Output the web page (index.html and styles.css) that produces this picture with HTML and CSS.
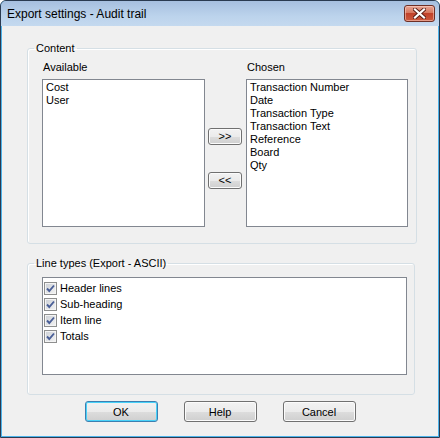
FILE: index.html
```html
<!DOCTYPE html>
<html lang="en">
<head>
<meta charset="UTF-8">
<title>Export settings - Audit trail</title>
<link rel="stylesheet" href="styles.css">
</head>
<body>
    <!-- Dialog window -->
    <div class="window">
        <div class="titlebar">
            <span class="title">Export settings - Audit trail</span>
            <button class="close" title="Close">
                <svg width="13" height="11" viewBox="0 0 13 11">
                    <path d="M2 1.5 L11 9.5 M11 1.5 L2 9.5" stroke="#5a1e16" stroke-width="4" stroke-linecap="square"/>
                    <path d="M2 1.5 L11 9.5 M11 1.5 L2 9.5" stroke="#ffffff" stroke-width="2.2" stroke-linecap="square"/>
                </svg>
            </button>
        </div>

        <div class="client">
            <fieldset class="group content-group">
                <legend>Content</legend>
                <div class="content-row">
                    <div class="col col-available">
                        <div class="caption">Available</div>
                        <div class="listbox">
                            <div>Cost</div>
                            <div>User</div>
                        </div>
                    </div>
                    <div class="mover">
                        <button class="btn small">&gt;&gt;</button>
                        <button class="btn small">&lt;&lt;</button>
                    </div>
                    <div class="col col-chosen">
                        <div class="caption">Chosen</div>
                        <div class="listbox">
                            <div>Transaction Number</div>
                            <div>Date</div>
                            <div>Transaction Type</div>
                            <div>Transaction Text</div>
                            <div>Reference</div>
                            <div>Board</div>
                            <div>Qty</div>
                        </div>
                    </div>
                </div>
            </fieldset>

            <fieldset class="group lines-group">
                <legend>Line types (Export - ASCII)</legend>
                <div class="listbox checklist">
                    <label class="check"><span class="box"></span>Header lines</label>
                    <label class="check"><span class="box"></span>Sub-heading</label>
                    <label class="check"><span class="box"></span>Item line</label>
                    <label class="check"><span class="box"></span>Totals</label>
                </div>
            </fieldset>

            <div class="actions">
                <button class="btn default">OK</button>
                <button class="btn">Help</button>
                <button class="btn">Cancel</button>
            </div>
        </div>
    </div>
</body>
</html>
```

FILE: styles.css
```css
body {
    margin: 0;
    background: #ffffff;
    font-family: "Liberation Sans", Arial, sans-serif;
    font-size: 11px;
    color: #000;
}
.window {
    width: 440px;
    height: 438px;
    box-sizing: border-box;
    border: 1px solid #2a3a50;
    border-radius: 6px 6px 0 0;
    background: #4db3ea;
    display: flex;
    flex-direction: column;
    overflow: hidden;
}
.titlebar {
    height: 25px;
    flex: none;
    display: flex;
    align-items: center;
    padding: 0 4px 0 6px;
    background: linear-gradient(#a6bfdf, #bcd3ec 60%, #c4d9ef);
}
.title {
    flex: 1;
    font-size: 12px;
    color: #000;
    padding-top: 1px;
}
.close {
    width: 31px;
    height: 17px;
    margin-bottom: 1px;
    padding: 0;
    border: 1px solid #6e2f25;
    border-radius: 3px;
    background: linear-gradient(#e8a493, #d7785f 45%, #c1412a 50%, #cc5a3e 100%);
    box-shadow: inset 0 0 0 1px rgba(255, 220, 210, 0.5);
    display: flex;
    align-items: center;
    justify-content: center;
}
.client {
    flex: 1;
    margin: 0 1px 1px 1px;
    background: #f0f0f0;
    overflow: hidden;
}
.group {
    margin: 0 0 0 25px;
    border: 1px solid #d5dfe5;
    border-radius: 3px;
    box-shadow: inset 1px 1px 0 #fff;
    min-width: 0;
}
.group legend {
    line-height: 13px;
    padding: 0 2px;
    margin-left: 6px;
}
.content-group {
    width: 390px;
    box-sizing: border-box;
    margin-top: 16px;
    padding: 6px 0 16px 0;
}
.lines-group {
    width: 388px;
    box-sizing: border-box;
    margin-top: 13px;
    padding: 7px 0 19px 0;
}
.content-row {
    display: flex;
    margin-left: 14px;
}
.caption {
    line-height: 13px;
    padding-left: 1px;
    margin-bottom: 5px;
}
.col-available {
    width: 163px;
}
.col-chosen {
    width: 162px;
}
.listbox {
    height: 148px;
    box-sizing: border-box;
    border: 1px solid #828790;
    background: #fff;
    padding: 1px 3px;
    line-height: 13px;
}
.mover {
    width: 34px;
    margin: 0 4px 0 3px;
    padding-top: 67px;
    display: flex;
    flex-direction: column;
    gap: 27px;
}
.btn {
    font-family: "Liberation Sans", Arial, sans-serif;
    font-size: 11px;
    color: #000;
    width: 73px;
    height: 21px;
    padding: 0;
    border: 1px solid #707070;
    border-radius: 3px;
    background: linear-gradient(#f2f2f2, #ebebeb 50%, #dddddd 51%, #cfcfcf);
    box-shadow: inset 0 0 0 1px #fbfbfb;
}
.btn.small {
    width: 34px;
    height: 17px;
    line-height: 13px;
}
.btn.default {
    border-color: #3c7fb1;
    box-shadow: inset 0 0 0 1px #48d2f9;
}
.checklist {
    height: 98px;
    margin: 0 7px 0 14px;
    padding: 2px 1px;
}
.check {
    display: flex;
    align-items: center;
    height: 16px;
}
.box {
    width: 13px;
    height: 13px;
    box-sizing: border-box;
    margin-right: 3px;
    border: 1px solid #8e8f8f;
    background:
        url("data:image/svg+xml;utf8,<svg xmlns='http://www.w3.org/2000/svg' width='11' height='11'><path d='M2 5.5 L4.3 8 L9 2.5' fill='none' stroke='%234a5f97' stroke-width='1.9'/></svg>") no-repeat,
        linear-gradient(135deg, #cbcfd5, #f4f4f4);
    box-shadow: inset 0 0 0 1px #f4f4f4;
}
.actions {
    margin-top: 6px;
    display: flex;
    justify-content: center;
    gap: 26px;
}
```
